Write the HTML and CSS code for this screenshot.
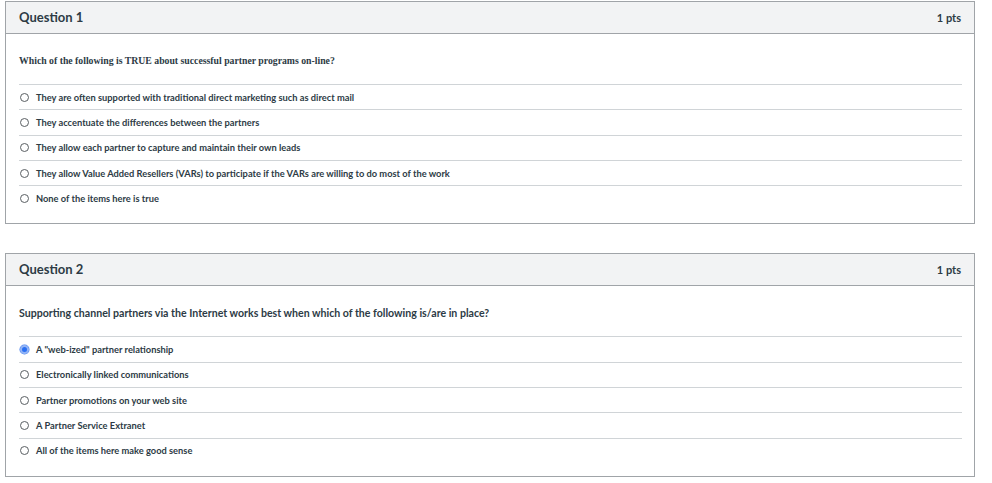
FILE: index.html
```html
<!DOCTYPE html>
<html>
<head>
	<title>Quiz</title>
	<link rel="stylesheet" href="styles.css">
</head>
<body>
	<div class="quiz">
		<div class="question">
			<div class="header">
				<span class="name">Question 1</span>
				<span class="pts">1 pts</span>
			</div>
			<div class="content">
				<div class="text serif">Which of the following is TRUE about successful partner programs on-line?</div>
				<div class="answers">
					<div class="answer"><span class="radio"></span>They are often supported with traditional direct marketing such as direct mail</div>
					<div class="answer"><span class="radio"></span>They accentuate the differences between the partners</div>
					<div class="answer"><span class="radio"></span>They allow each partner to capture and maintain their own leads</div>
					<div class="answer"><span class="radio"></span>They allow Value Added Resellers (VARs) to participate if the VARs are willing to do most of the work</div>
					<div class="answer"><span class="radio"></span>None of the items here is true</div>
				</div>
			</div>
		</div>
		<div class="question">
			<div class="header">
				<span class="name">Question 2</span>
				<span class="pts">1 pts</span>
			</div>
			<div class="content">
				<div class="text">Supporting channel partners via the Internet works best when which of the following is/are in place?</div>
				<div class="answers">
					<div class="answer"><span class="radio checked"></span>A "web-ized" partner relationship</div>
					<div class="answer"><span class="radio"></span>Electronically linked communications</div>
					<div class="answer"><span class="radio"></span>Partner promotions on your web site</div>
					<div class="answer"><span class="radio"></span>A Partner Service Extranet</div>
					<div class="answer"><span class="radio"></span>All of the items here make good sense</div>
				</div>
			</div>
		</div>
	</div>
</body>
</html>
```

FILE: styles.css
```css
* {
	box-sizing: border-box;
}
body {
	margin: 0;
	padding: 1px 0 0 5px;
	font-family: Lato, "Liberation Sans", sans-serif;
	color: #2d3b45;
	background: #fff;
}
.quiz {
	width: 970px;
	display: flex;
	flex-direction: column;
	gap: 29px;
}
.question {
	border: 1px solid #a0a4a8;
}
.header {
	height: 32px;
	background: #f2f3f4;
	border-bottom: 1px solid #a0a4a8;
	display: flex;
	justify-content: space-between;
	align-items: center;
	padding: 0 13px 1px 13px;
}
.name {
	font-size: 13px;
	font-weight: bold;
}
.pts {
	font-size: 11px;
	font-weight: bold;
}
.content {
	padding: 20px 12px 13px 13px;
}
.text {
	font-size: 10.6px;
	font-weight: bold;
	line-height: 14px;
	padding-bottom: 16px;
}
.text.serif {
	font-family: "Liberation Serif", serif;
	font-size: 9.75px;
}
.answer {
	height: 25.3px;
	border-top: 1px solid #d0d4d7;
	display: flex;
	align-items: center;
	font-size: 9.3px;
	font-weight: bold;
	padding-left: 1px;
}
.radio {
	width: 9px;
	height: 9px;
	border: 1px solid #5a5f63;
	border-radius: 50%;
	margin-right: 7px;
	flex-shrink: 0;
}
.radio.checked {
	border: 2px solid #93b4f5;
	background: #2a6ff2;
	box-shadow: 0 0 0 0.5px #4b84f0;
}
```
